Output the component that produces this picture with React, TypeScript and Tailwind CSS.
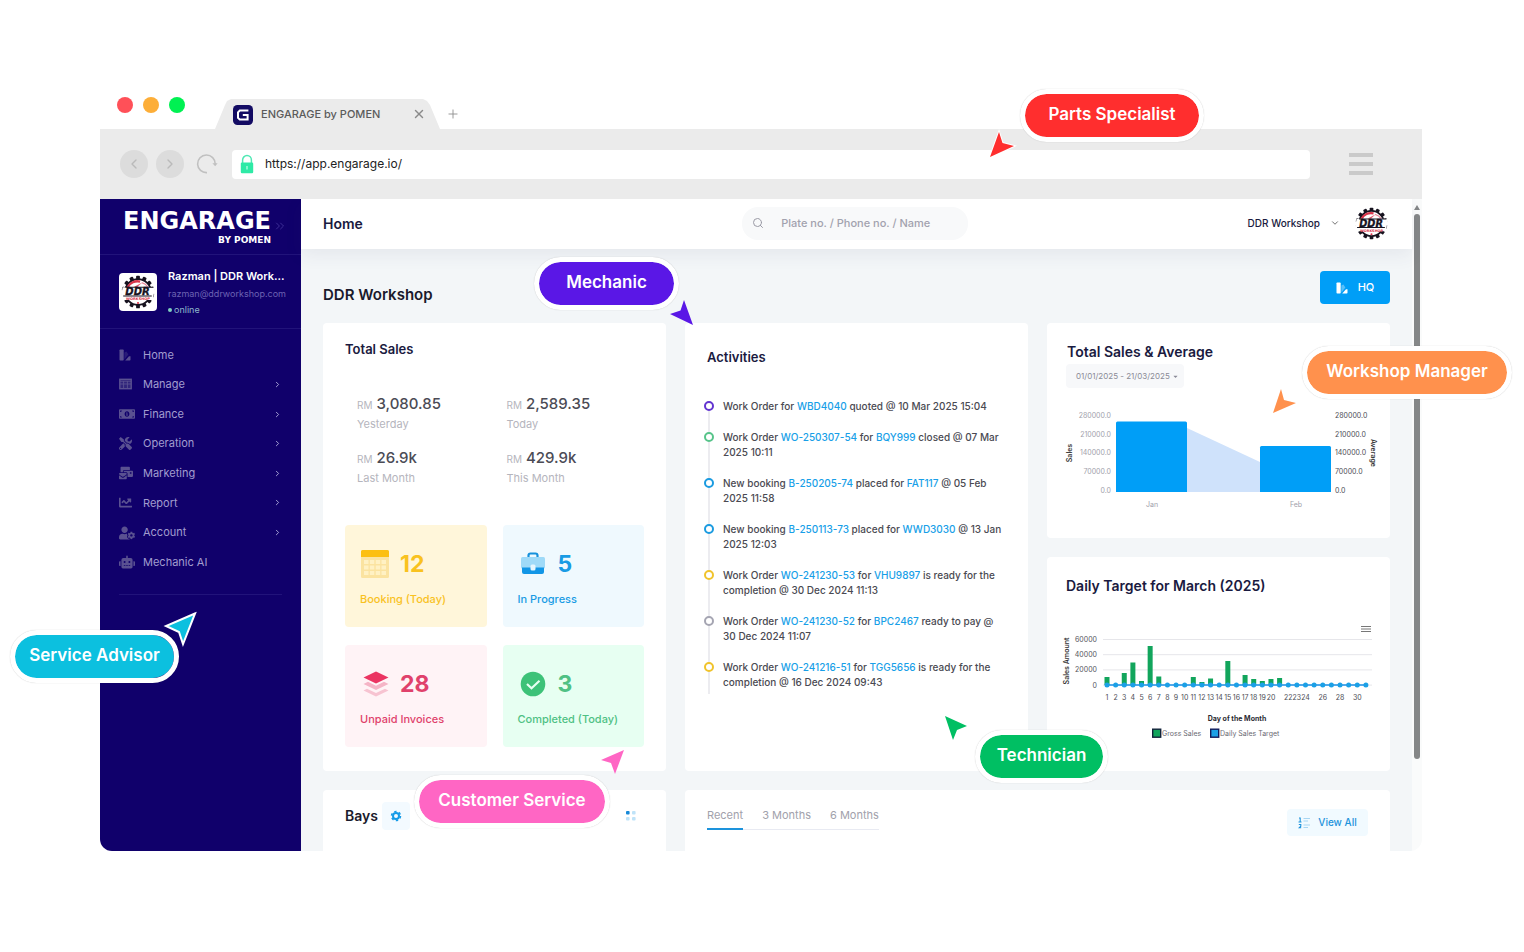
import type { ReactNode } from "react";
import { FaChartLine, FaMailBulk, FaMoneyBillAlt, FaRobot, FaTools, FaUserCog, FaCaretDown } from "react-icons/fa";
import { ChevronDown, ChevronLeft, ChevronRight, ChevronsRight, Search, X, Plus } from "lucide-react";

function SwatchIcon({ className }: { className?: string }) {
  return (
    <svg viewBox="0 0 12 12" className={className} fill="currentColor" aria-hidden="true">
      <rect x="0.5" y="0.5" width="4.2" height="11" rx="0.8" />
      <path d="M5.4 3.6 7.4 2.4 9.4 5.4 5.4 10.4Z" opacity="0.35" />
      <path d="M6.2 11.5 10 7.2h1.5v3.5a.8.8 0 0 1-.8.8Z" />
    </svg>
  );
}

function GridIcon({ className }: { className?: string }) {
  return (
    <svg viewBox="0 0 13 12" className={className} aria-hidden="true">
      <rect x="0.8" y="1.3" width="11.4" height="9.4" fill="currentColor" fillOpacity="0.45" stroke="currentColor" strokeWidth="1.4" />
      <path d="M1 6h11M4.6 3v7M8.4 3v7M1 3.2h11" stroke="currentColor" strokeWidth="0.9" />
    </svg>
  );
}

function GearLogo({ className }: { className?: string }) {
  const teeth = Array.from({ length: 14 }, (_, i) => i * (360 / 14));
  return (
    <svg viewBox="0 0 34 34" className={className} role="img" aria-label="DDR Workshop logo">
      {teeth.map((a) => (
        <rect key={a} x="15.2" y="1.6" width="3.6" height="4" rx="0.8" fill="#17131f" transform={`rotate(${a} 17 17)`} />
      ))}
      <circle cx="17" cy="17" r="12.2" fill="#fff" stroke="#17131f" strokeWidth="1.8" />
      <path d="M7.2 12.5A10.4 10.4 0 0 1 19 7.2" stroke="#d8344a" strokeWidth="2.2" fill="none" />
      <path d="M20.5 8.2a10 10 0 0 1 6 4.3" stroke="#e8899a" strokeWidth="1.2" fill="none" />
      <path d="m13 12.300 8-4.300-4.600 4.300Z" fill="#e0566a" />
      <path d="M2.500 12.500H33L31 24.600H2L1 21Z" fill="#fff" />
      <path d="M5 12.600H31.500M3 20.800H30" stroke="#17131f" strokeWidth="1" />
      <text x="16.600" y="20" textAnchor="middle" fontSize="9.500" fontWeight="700" fontStyle="italic" fontFamily="DejaVu Sans, sans-serif" fill="#17131f" stroke="#17131f" strokeWidth="0.3">DDR</text>
      <text x="17" y="25" textAnchor="middle" fontSize="3.400" fontWeight="700" fontFamily="DejaVu Sans, sans-serif" fill="#d8344a">WORKSHOP</text>
      <circle cx="17" cy="27.400" r="1" fill="#d8344a" />
    </svg>
  );
}

const navItems: { label: string; icon: ReactNode; more?: boolean }[] = [
  { label: "Home", icon: <SwatchIcon className="size-3" /> },
  { label: "Manage", icon: <GridIcon className="h-3 w-[13px]" />, more: true },
  { label: "Finance", icon: <FaMoneyBillAlt className="size-4" />, more: true },
  { label: "Operation", icon: <FaTools className="size-[13px]" />, more: true },
  { label: "Marketing", icon: <FaMailBulk className="size-[14px]" />, more: true },
  { label: "Report", icon: <FaChartLine className="size-[13px]" />, more: true },
  { label: "Account", icon: <FaUserCog className="size-4" />, more: true },
  { label: "Mechanic AI", icon: <FaRobot className="size-4" /> },
];

function Sidebar() {
  return (
    <aside className="w-[201px] shrink-0 bg-[#10006b]">
      <div className="flex h-14 items-start border-b border-[#21137a] pt-2 pl-[18px]">
        <div className="flex w-[153px] flex-col items-end font-['DejaVu_Sans',sans-serif] font-bold text-white">
          <span className="text-[24px] leading-[28px]">ENGARAGE</span>
          <span className="text-[9px] leading-[11px]">BY POMEN</span>
        </div>
        <button aria-label="Collapse sidebar" className="mt-3 ml-0.5 text-[#42359b]">
          <ChevronsRight className="size-3.5" strokeWidth={1.5} />
        </button>
      </div>
      <div className="flex h-[74px] items-center gap-[11px] border-b border-[#21137a] pl-[19px]">
        <div className="grid size-[38px] shrink-0 place-items-center rounded bg-white">
          <GearLogo className="size-9" />
        </div>
        <div className="pt-0.5 whitespace-nowrap">
          <p className="text-[11px] leading-[17px] font-semibold text-white">Razman | DDR Work...</p>
          <p className="text-[9px] leading-[18px] text-[#6d63b3]">razman@ddrworkshop.com</p>
          <p className="flex items-center gap-0.5 text-[9px] leading-[14px] text-[#8fb9cb]">
            <span className="size-1 rounded-full bg-[#7fd0bd]" />
            online
          </p>
        </div>
      </div>
      <nav className="mx-[19px] mt-[11px] border-b border-[#21137a] pb-[17px]">
        <ul className="flex h-[237px] flex-col">
          {navItems.map((item) => (
            <li key={item.label} className="flex-1">
              <a href="#" className="flex h-full items-center text-[11px] text-[#a29dcf]">
                <span className="w-6 text-[#5a5191]">{item.icon}</span>
                <span className="flex-1">{item.label}</span>
                {item.more && <ChevronRight className="size-[9px] text-[#aaa5d8]" strokeWidth={2.5} />}
              </a>
            </li>
          ))}
        </ul>
      </nav>
    </aside>
  );
}

function BrowserChrome() {
  return (
    <header>
      <div className="flex h-[30px] items-start">
        <div className="-mt-0.5 flex gap-2.5 pl-[17px]">
          <span className="size-4 rounded-full bg-[#ff5058]" />
          <span className="size-4 rounded-full bg-[#fdae38]" />
          <span className="size-4 rounded-full bg-[#00f152]" />
        </div>
        <div className="ml-[30px] flex h-[30px] w-[225px] items-center bg-[#ebebeb] pr-[14px] pl-[18px] [clip-path:polygon(0_100%,10px_6px,12px_2px,16px_0,208px_0,212px_2px,215px_6px,100%_100%)]">
          <svg viewBox="0 0 20 20" className="mt-0.5 size-5" aria-hidden="true">
            <rect width="20" height="20" rx="4.5" fill="#130b63" />
            <path d="M15.4 5.6H6.8L5 7.4v5.4l1.8 1.8h7.8V10H9.8" fill="none" stroke="#fff" strokeWidth="2" />
          </svg>
          <span className="ml-2 flex-1 text-[11px] font-medium text-[#5b5b5b]">ENGARAGE by POMEN</span>
          <button aria-label="Close tab" className="text-[#8a8a8a]">
            <X className="size-3.5" strokeWidth={2.4} />
          </button>
        </div>
        <button aria-label="New tab" className="mt-2 ml-1.5 text-[#8b8b8b]">
          <Plus className="size-3.5" strokeWidth={1.5} />
        </button>
      </div>
      <div className="flex h-[70px] items-center bg-[#ebebeb] pl-5">
        <button aria-label="Back" className="grid size-7 place-items-center rounded-full bg-[#dcdcdc] text-[#bababa]">
          <ChevronLeft className="size-4" />
        </button>
        <button aria-label="Forward" className="ml-2 grid size-7 place-items-center rounded-full bg-[#dcdcdc] text-[#bababa]">
          <ChevronRight className="size-4" />
        </button>
        <button aria-label="Reload" className="ml-3 text-[#c0c0c0]">
          <svg viewBox="0 0 22 22" className="size-[22px]" fill="none" stroke="currentColor" strokeWidth="1.6">
            <path d="M11 19.6A8.8 8.8 0 1 1 19.2 11" />
            <path d="M16.4 10.2h5.2l-2.4 3Z" fill="currentColor" stroke="none" />
          </svg>
        </button>
        <div className="ml-3.5 flex h-[29px] flex-1 items-center rounded-sm bg-white pl-2">
          <svg viewBox="0 0 14 20" className="h-5 w-3.5" aria-hidden="true">
            <path d="M2.600 9V6a4.400 4.400 0 0 1 8.800 0v3" fill="none" stroke="#4fe8b4" strokeWidth="1.500" />
            <rect x="0.800" y="8.500" width="12.400" height="10.700" rx="1.200" fill="#2eeaa6" />
            <path d="M7 12v3.400" stroke="#b8fbe2" strokeWidth="1.300" />
          </svg>
          <input aria-label="Address" defaultValue="https://app.engarage.io/" className="ml-[11px] flex-1 bg-transparent text-[12px] text-[#222] outline-none" />
        </div>
        <button aria-label="Browser menu" className="mr-[49px] ml-[39px] flex w-6 flex-col gap-[5px]">
          <span className="h-[4px] bg-[#cacaca]" />
          <span className="h-[4px] bg-[#cacaca]" />
          <span className="h-[4px] bg-[#cacaca]" />
        </button>
      </div>
    </header>
  );
}

function Stat({ amount, label }: { amount: string; label: string }) {
  return (
    <div>
      <p className="text-[15px] leading-[22px] font-medium text-[#4b4b55]">
        <span className="text-[10px] font-normal text-[#b5b5bd]">RM</span> {amount}
      </p>
      <p className="text-[11px] leading-4 text-[#b5b5bd]">{label}</p>
    </div>
  );
}

function Tile({ icon, value, label, tone }: { icon: ReactNode; value: string; label: string; tone: string }) {
  return (
    <a href="#" className={`flex h-[102px] flex-col rounded-sm pt-6 pl-[15px] ${tone}`}>
      <span className="flex h-[30px] items-center gap-2.5">
        <span className="size-[30px]">{icon}</span>
        <span className="text-[23px] leading-[30px] font-bold">{value}</span>
      </span>
      <span className="mt-3 text-[11px] leading-4 font-medium">{label}</span>
    </a>
  );
}

function TotalSales() {
  return (
    <section className="rounded bg-white px-[22px] pt-4 pb-6">
      <h2 className="text-[13px] leading-5 font-semibold text-[#1a1a40]">Total Sales</h2>
      <div className="mt-[34px] grid grid-cols-2 gap-x-3 gap-y-[15px] pl-3">
        <Stat amount="3,080.85" label="Yesterday" />
        <Stat amount="2,589.35" label="Today" />
        <Stat amount="26.9k" label="Last Month" />
        <Stat amount="429.9k" label="This Month" />
      </div>
      <div className="mt-[39px] grid grid-cols-2 gap-x-4 gap-y-[18px]">
        <Tile
          value="12"
          label="Booking (Today)"
          tone="bg-[#fff6da] text-[#f9c21f]"
          icon={
            <svg viewBox="0 0 30 30">
              <rect x="1" y="1" width="28" height="28" rx="1.5" fill="#fbe3a0" />
              <path d="M1 8V2.5A1.5 1.5 0 0 1 2.500 1h25A1.500 1.500 0 0 1 29 2.500V8Z" fill="#fcbf10" />
              <path d="M4 11h4.500v4H4zm5.800 0h4.500v4H9.800zm5.900 0h4.500v4h-4.500zm5.800 0H26v4h-4.500zM4 16.500h4.500v4H4zm5.800 0h4.500v4H9.800zm5.900 0h4.500v4h-4.500zm5.800 0H26v4h-4.500zM4 22h4.500v4H4zm5.800 0h4.500v4H9.800zm5.900 0h4.500v4h-4.500zm5.800 0H26v4h-4.500z" fill="#fff1c4" />
            </svg>
          }
        />
        <Tile
          value="5"
          label="In Progress"
          tone="bg-[#eff9fe] text-[#189be4]"
          icon={
            <svg viewBox="0 0 30 30">
              <path d="M10.500 8V6.500a2 2 0 0 1 2-2h5a2 2 0 0 1 2 2V8" fill="none" stroke="#1691dc" strokeWidth="2.200" />
              <rect x="3" y="8" width="24" height="11.500" rx="1.500" fill="#9fdaf8" />
              <path d="M4 18.500h22V23a2 2 0 0 1-2 2H6a2 2 0 0 1-2-2Z" fill="#1296e6" />
              <rect x="12.500" y="15.500" width="5" height="6" rx="1.500" fill="#e5f6fe" />
            </svg>
          }
        />
        <Tile
          value="28"
          label="Unpaid Invoices"
          tone="bg-[#fff3f6] text-[#e0416b]"
          icon={
            <svg viewBox="0 0 30 30">
              <path d="m3.500 8.500 12.500-6 12.500 6-12.500 6Z" fill="#eb3462" />
              <path d="M3.500 15 8 12.800l8 3.900 8-3.900 4.500 2.200-12.500 6Z" fill="#f5b4c6" />
              <path d="m3.500 21.500 3.500-1.700 9 4.300 9-4.300 3.500 1.700L16 27.500Z" fill="#f7c3d1" />
            </svg>
          }
        />
        <Tile
          value="3"
          label="Completed (Today)"
          tone="bg-[#e7fff2] text-[#4fc184]"
          icon={
            <svg viewBox="0 0 30 30">
              <circle cx="15" cy="15" r="12.300" fill="#3dc278" />
              <path d="m9 15 4.500 4.200 8-7.400" fill="none" stroke="#e7fff2" strokeWidth="2.200" />
            </svg>
          }
        />
      </div>
    </section>
  );
}

function Ref({ children }: { children: ReactNode }) {
  return <a href="#" className="text-[#189fe8]">{children}</a>;
}

const activities: { ring: string; text: ReactNode }[] = [
  { ring: "border-[#6234d0]", text: <>Work Order for <Ref>WBD4040</Ref> quoted @ 10 Mar 2025 15:04</> },
  { ring: "border-[#57c48a]", text: <>Work Order <Ref>WO-250307-54</Ref> for <Ref>BQY999</Ref> closed @ 07 Mar<br />2025 10:11</> },
  { ring: "border-[#1b9be0]", text: <>New booking <Ref>B-250205-74</Ref> placed for <Ref>FAT117</Ref> @ 05 Feb<br />2025 11:58</> },
  { ring: "border-[#1b9be0]", text: <>New booking <Ref>B-250113-73</Ref> placed for <Ref>WWD3030</Ref> @ 13 Jan<br />2025 12:03</> },
  { ring: "border-[#f0c32c]", text: <>Work Order <Ref>WO-241230-53</Ref> for <Ref>VHU9897</Ref> is ready for the<br />completion @ 30 Dec 2024 11:13</> },
  { ring: "border-[#a5a5b2]", text: <>Work Order <Ref>WO-241230-52</Ref> for <Ref>BPC2467</Ref> ready to pay @<br />30 Dec 2024 11:07</> },
  { ring: "border-[#f0c32c]", text: <>Work Order <Ref>WO-241216-51</Ref> for <Ref>TGG5656</Ref> is ready for the<br />completion @ 16 Dec 2024 09:43</> },
];

function Activities() {
  return (
    <section className="rounded bg-white px-[22px] pt-6">
      <h2 className="text-[13px] leading-5 font-semibold text-[#1a1a40]">Activities</h2>
      <ul className="relative mt-8 flex flex-col gap-4">
        <li aria-hidden="true" className="absolute top-2 -bottom-1 left-px w-0.5 bg-[#ececf0]" />
        {activities.map((a, i) => (
          <li key={i} className="relative -ml-[3px] flex gap-[9px] text-[10px] leading-[15px] font-medium whitespace-nowrap text-[#4a4a52]">
            <span className={`mt-0.5 size-2.5 shrink-0 rounded-full border-2 bg-white ${a.ring}`} />
            <p>{a.text}</p>
          </li>
        ))}
      </ul>
    </section>
  );
}

function SalesChart() {
  const ticks = ["280000.0", "210000.0", "140000.0", "70000.0", "0.0"];
  return (
    <svg viewBox="0 0 343 120" className="w-full" role="img" aria-label="Sales and average by month" fontSize="7">
      <path d="M140 28 213 62V92H140Z" fill="#cfe2fb" />
      <path d="M69 92V23a1.500 1.500 0 0 1 1.500-1.500h68A1.500 1.500 0 0 1 140 23v69Z" fill="#009ef7" />
      <path d="M213 92V47.500a1.500 1.500 0 0 1 1.500-1.500h68a1.500 1.500 0 0 1 1.500 1.500V92Z" fill="#009ef7" />
      {ticks.map((t, i) => (
        <g key={t}>
          <text x="64" y={18 + i * 18.7} textAnchor="end" fill="#a1a1ab">{t}</text>
          <text x="288" y={18 + i * 18.7} fill="#4d4d55">{t}</text>
        </g>
      ))}
      <text x="105" y="107" textAnchor="middle" fill="#a1a1ab">Jan</text>
      <text x="249" y="107" textAnchor="middle" fill="#a1a1ab">Feb</text>
      <text transform="translate(25 53) rotate(-90)" textAnchor="middle" fontWeight="600" fill="#333">Sales</text>
      <text transform="translate(324 53) rotate(90)" textAnchor="middle" fontWeight="600" fill="#333">Average</text>
    </svg>
  );
}

const daily: [number, number][] = [
  [1, 8], [3, 12], [4, 22.5], [5, 4], [6, 39], [7, 8.5], [11, 8], [12, 3], [13, 6.5],
  [15, 24], [17, 10], [18, 6], [19, 4], [20, 6], [21, 7],
];

function DailyChart() {
  const x = (d: number) => 60 + (d - 1) * 8.63;
  const days = Array.from({ length: 31 }, (_, i) => i + 1);
  const labelled = days.filter((d) => d <= 20 || [22, 23, 24, 26, 28, 30].includes(d));
  return (
    <svg viewBox="0 0 343 125" className="w-full" role="img" aria-label="Gross sales per day" fontSize="7">
      <path d="M314 6.500h10M314 9h10M314 11.500h10" stroke="#777" strokeWidth="1" />
      {["60000", "40000", "20000", "0"].map((t, i) => (
        <g key={t}>
          <path d={`M56 ${19.500 + i * 15.200}H325`} stroke="#e6e6ea" strokeWidth="1" />
          <text x="50" y={22 + i * 15.200} textAnchor="end" fill="#55555d">{t}</text>
        </g>
      ))}
      {daily.map(([d, h]) => (
        <rect key={d} x={x(d) - 2.500} y={65 - h} width="5" height={h} fill="#12a55c" />
      ))}
      <path d="M60 65H319" stroke="#1b8fe6" strokeWidth="1.600" />
      {days.map((d) => (
        <circle key={d} cx={x(d)} cy="65" r="2.500" fill="#1ba0e6" />
      ))}
      {labelled.map((d) => (
        <text key={d} x={x(d)} y="79.500" textAnchor="middle" fill="#4d4d55">{d}</text>
      ))}
      <text transform="translate(22 41) rotate(-90)" textAnchor="middle" fontWeight="600" fill="#333">Sales Amount</text>
      <text x="190" y="101" textAnchor="middle" fontWeight="700" fill="#2b2b33">Day of the Month</text>
      <rect x="105.700" y="109.200" width="8" height="8" fill="#12a55c" stroke="#12223a" strokeWidth="1.400" />
      <text x="115" y="116">Gross Sales</text>
      <rect x="163.700" y="109.200" width="8" height="8" fill="#1ba0e6" stroke="#101a5a" strokeWidth="1.400" />
      <text x="173" y="116">Daily Sales Target</text>
    </svg>
  );
}

function Dashboard() {
  return (
    <main className="min-w-0 flex-1 bg-[#f3f6f8]">
      <div className="relative flex h-[50px] items-center bg-white pr-[23px] pb-0.5 pl-[22px] shadow-[0_6px_18px_rgba(60,70,100,0.08)]">
        <h1 className="text-[14px] font-semibold text-[#1a1a40]">Home</h1>
        <div className="flex flex-1 justify-center">
          <label className="ml-[100px] flex h-[33px] w-[226px] items-center rounded-2xl bg-[#f8f9fa] pl-2.5">
            <Search className="size-3 shrink-0 text-[#9a9aa5]" aria-hidden="true" />
            <input aria-label="Search" placeholder="Plate no. / Phone no. / Name" className="ml-[17px] w-full bg-transparent text-[11px] font-medium outline-none placeholder:text-[#a2a2ae]" />
          </label>
        </div>
        <button className="flex items-center gap-2.5 text-[10px] font-medium text-[#1a1a40]">
          DDR Workshop
          <ChevronDown className="size-2.5 text-[#555]" />
        </button>
        <GearLogo className="ml-3.5 size-[35px]" />
      </div>
      <div className="px-[22px] pt-[22px]">
        <div className="flex h-[33px] items-center justify-between">
          <h2 className="pt-4 text-[15px] font-semibold text-[#1a1a2c]">DDR Workshop</h2>
          <button className="flex h-[33px] w-[70px] items-center justify-center gap-2.5 rounded bg-[#009ef7] text-[11px] font-medium text-white">
            <SwatchIcon className="size-3" />
            HQ
          </button>
        </div>
        <div className="mt-[19px] grid grid-cols-3 gap-[19px]">
          <TotalSales />
          <Activities />
          <div className="flex flex-col gap-[19px]">
            <section className="flex-1 rounded bg-white">
              <h2 className="pt-[19px] pl-5 text-[14px] leading-5 font-semibold text-[#1a1a40]">Total Sales &amp; Average</h2>
              <button className="mt-0.5 ml-[19px] flex h-6 w-[118px] items-center gap-0.5 rounded bg-[#f7f8fa] pl-2.5 text-[8px] text-[#8a8a96]">
                01/01/2025 - 21/03/2025
                <FaCaretDown className="size-[7px]" />
              </button>
              <div className="mt-3">
                <SalesChart />
              </div>
            </section>
            <section className="flex-1 rounded bg-white">
              <h2 className="pt-[19px] pl-[19px] text-[14px] leading-5 font-semibold text-[#1a1a40]">Daily Target for March (2025)</h2>
              <div className="mt-6 fill-[#6a6a72]">
                <DailyChart />
              </div>
            </section>
          </div>
          <section className="flex h-[61px] items-center rounded-t bg-white px-[22px] pb-2.5">
            <h2 className="text-[14px] font-semibold text-[#1a1a2c]">Bays</h2>
            <button aria-label="Bay settings" className="ml-1 grid size-7 place-items-center rounded bg-[#f3faff]">
              <svg viewBox="0 0 12 12" className="size-3" fill="none" stroke="#149be8">
                <circle cx="6" cy="6" r="3" strokeWidth="2" />
                <circle cx="6" cy="6" r="4.500" strokeWidth="1.500" strokeDasharray="2.360 2.360" />
              </svg>
            </button>
            <button aria-label="Bay menu" className="mr-2 ml-auto">
              <svg viewBox="0 0 10 10" className="size-2.5">
                <rect width="3.600" height="3.600" rx="1" fill="#1689d8" />
                <rect x="6" width="3.600" height="3.600" rx="1" fill="#bfe3f8" />
                <rect y="6" width="3.600" height="3.600" rx="1" fill="#bfe3f8" />
                <rect x="6" y="6" width="3.600" height="3.600" rx="1" fill="#bfe3f8" />
              </svg>
            </button>
          </section>
          <section className="col-span-2 flex h-[61px] items-start justify-between rounded-t bg-white px-[22px] pt-[15px]">
            <div role="tablist" className="flex h-[25px] gap-[19px] border-b border-[#e8eaf2] text-[11px] leading-5 text-[#a1a1ab]">
              <button role="tab" aria-selected="true" className="h-[25px] border-b-2 border-[#1d93dc] pb-1">Recent</button>
              <button role="tab" aria-selected="false" className="pb-1">3 Months</button>
              <button role="tab" aria-selected="false" className="pb-1">6 Months</button>
            </div>
            <button className="mt-1 flex h-[27px] w-[81px] items-center justify-center gap-2 rounded bg-[#f1faff] text-[10px] font-medium text-[#1d93dc]">
              <svg viewBox="0 0 12 12" className="size-3" fill="none" stroke="currentColor" aria-hidden="true">
                <path d="M1 1h1.200v4M.5 5h3M.8 7.500h2v1.700l-1.600 1.600h2" strokeWidth="1.100" />
                <path d="M5.500 1.500H12M5.500 4H10M5.500 8H12M5.500 10.500H10" opacity="0.350" />
              </svg>
              View All
            </button>
          </section>
        </div>
      </div>
    </main>
  );
}

const pills: { label: string; className: string }[] = [
  { label: "Parts Specialist", className: "left-[1020px] top-[89px] w-[184px] bg-[#ff2e2e]" },
  { label: "Mechanic", className: "left-[534px] top-[257px] w-[145px] bg-[#5a17e6]" },
  { label: "Workshop Manager", className: "left-[1302px] top-[346px] w-[210px] bg-[#ff914d]" },
  { label: "Service Advisor", className: "left-[10px] top-[630px] w-[169px] bg-[#0cc0df]" },
  { label: "Customer Service", className: "left-[414px] top-[775px] w-[196px] bg-[#ff66c4]" },
  { label: "Technician", className: "left-[975px] top-[730px] w-[133px] bg-[#00bf63]" },
];

const pointers: { name: string; className: string; points: string }[] = [
  { name: "parts", className: "left-[984px] top-[126px] fill-[#ff2e2e] stroke-white [paint-order:stroke]", points: "6,31 15,6 18.500,17 30,20" },
  { name: "mechanic", className: "left-[664px] top-[294px] fill-[#5a17e6]", points: "29,31 20,6 16.500,16.500 6,20" },
  { name: "manager", className: "left-[1267px] top-[383px] fill-[#ff914d]", points: "6,30 14,6 17,17 29,20" },
  { name: "advisor", className: "left-[158px] top-[606px] fill-[#0cc0df] stroke-white", points: "37,7.500 8,20 21,26 25,38" },
  { name: "customer", className: "left-[595px] top-[744px] fill-[#ff66c4]", points: "29,6 6,16 16,19 20,30" },
  { name: "technician", className: "left-[939px] top-[710px] fill-[#00bf63]", points: "6,6 28,16 18,20 14,30" },
];

export default function App() {
  return (
    <div className="relative min-h-screen overflow-hidden bg-white pt-[99px] pr-[102px] pb-[101px] pl-[100px] font-[Inter,sans-serif]">
      <BrowserChrome />
      <div className="flex overflow-hidden rounded-b-xl">
        <Sidebar />
        <Dashboard />
        <div className="flex w-2.5 shrink-0 flex-col items-center bg-[#fafbfb] pt-1.5" aria-hidden="true">
          <svg viewBox="0 0 6 5" className="h-[5px] w-1.5"><path d="M3 0 6 5H0Z" fill="#858788" /></svg>
          <span className="mt-1 h-[545px] w-1.5 rounded-full bg-[#858788]" />
        </div>
      </div>
      {pointers.map((p) => (
        <svg key={p.name} viewBox="0 0 44 44" className={`absolute size-11 ${p.className}`} strokeWidth="2" aria-hidden="true">
          <polygon points={p.points} />
        </svg>
      ))}
      {pills.map((p) => (
        <span
          key={p.label}
          className={`absolute flex h-[53px] items-center justify-center rounded-full border-[5px] border-white bg-clip-padding pb-0.5 text-[17px] font-semibold whitespace-nowrap text-white shadow-[0_0_1px_rgba(0,0,0,0.25)] ${p.className}`}
        >
          {p.label}
        </span>
      ))}
    </div>
  );
}
